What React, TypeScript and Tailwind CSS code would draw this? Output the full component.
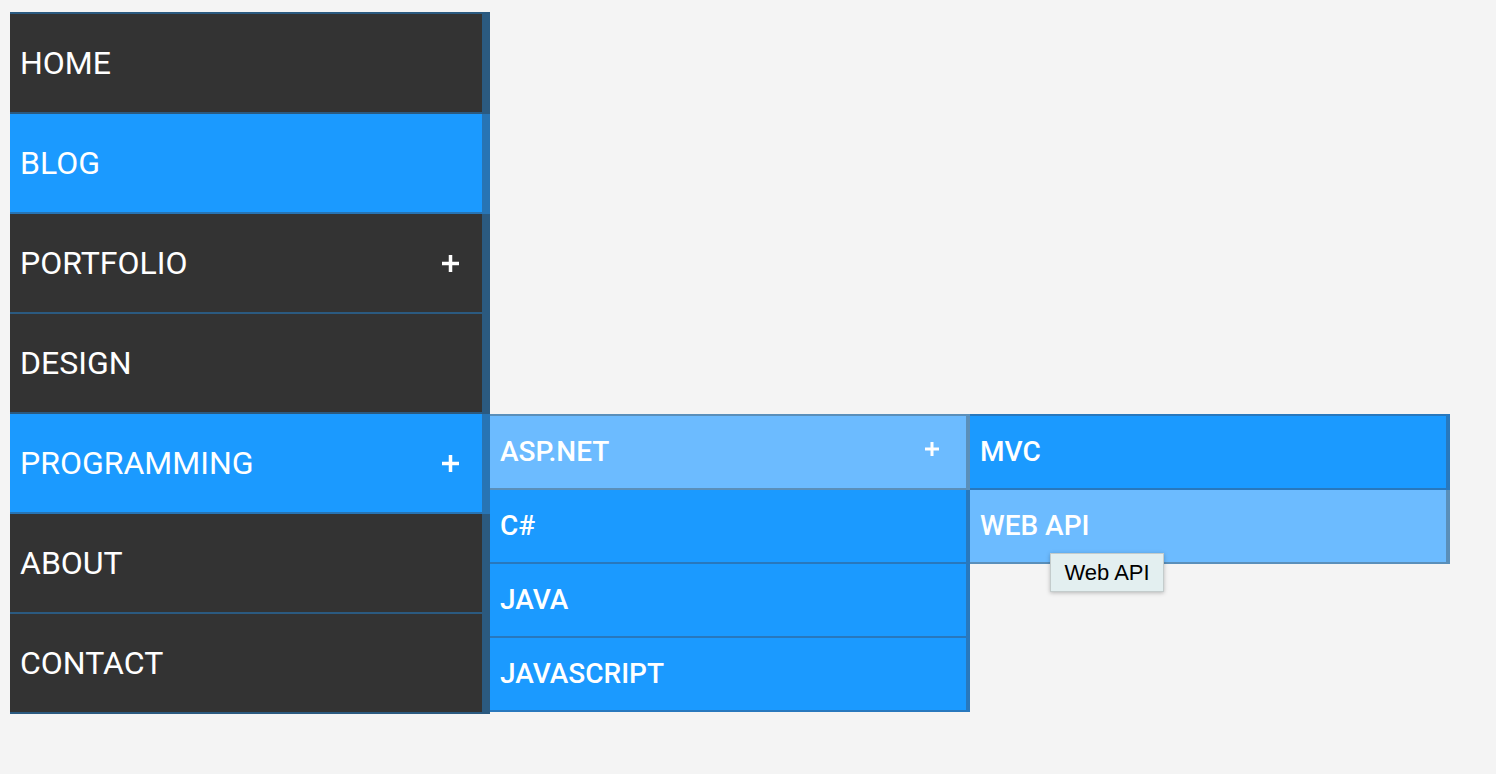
import { ReactNode } from 'react';

type Tone = 'dark' | 'blue' | 'light';

const mainTone: Record<Tone, string> = {
  dark: 'bg-[#333333] border-[#2b5a80]',
  blue: 'bg-[#1b9aff] border-[#2774b4]',
  light: 'bg-[#6cbbff] border-[#5a8fba]',
};

const subTone: Record<Tone, string> = {
  dark: 'bg-[#333333] border-[#2b5a80]',
  blue: 'bg-[#1b9aff] border-[#2878bd]',
  light: 'bg-[#6cbbff] border-[#5a8fba]',
};

function Plus({ size, stroke }: { size: number; stroke: number }) {
  const mid = (size - stroke) / 2;
  return (
    <svg width={size} height={size} viewBox={`0 0 ${size} ${size}`} fill="white">
      <rect x={0} y={mid} width={size} height={stroke} />
      <rect x={mid} y={0} width={stroke} height={size} />
    </svg>
  );
}

function MainItem({
  label,
  tone,
  first,
  more,
  children,
}: {
  label: string;
  tone: Tone;
  first?: boolean;
  more?: boolean;
  children?: ReactNode;
}) {
  return (
    <li
      className={`relative flex items-center border-b-2 border-r-8 pl-[10px] pr-[23px] text-[32px] text-white ${
        first ? 'h-[102px] border-t-2' : 'h-[100px]'
      } ${mainTone[tone]}`}
    >
      <span className="flex-1 leading-none">{label}</span>
      {more && <Plus size={17} stroke={3.5} />}
      {children}
    </li>
  );
}

function SubItem({
  label,
  tone,
  first,
  more,
  children,
}: {
  label: string;
  tone: Tone;
  first?: boolean;
  more?: boolean;
  children?: ReactNode;
}) {
  return (
    <li
      className={`relative flex items-center border-b-2 border-r-4 pl-[10px] pr-[27px] text-[28px] font-medium text-white ${
        first ? 'h-[76px] border-t-2' : 'h-[74px]'
      } ${subTone[tone]}`}
    >
      <span className="flex-1 leading-none">{label}</span>
      {more && (
        <span className="-mt-[6px]">
          <Plus size={14} stroke={3} />
        </span>
      )}
      {children}
    </li>
  );
}

export default function App() {
  return (
    <div
      className="h-[774px] w-full bg-[#f4f4f4] pl-[10px] pt-[12px]"
      style={{ fontFamily: 'Roboto, "Liberation Sans", sans-serif' }}
    >
      <ul className="w-[480px]">
        <MainItem label="HOME" tone="dark" first />
        <MainItem label="BLOG" tone="blue" />
        <MainItem label="PORTFOLIO" tone="dark" more />
        <MainItem label="DESIGN" tone="dark" />
        <MainItem label="PROGRAMMING" tone="blue" more>
          {/* first flyout */}
          <ul className="absolute left-[480px] top-0 z-10 w-[480px]">
            <SubItem label="ASP.NET" tone="light" first more>
              {/* second flyout */}
              <ul className="absolute left-[480px] top-[-2px] z-10 w-[480px]">
                <SubItem label="MVC" tone="blue" first />
                <SubItem label="WEB API" tone="light">
                  <div
                    className="absolute left-[80px] top-[63px] z-20 flex h-[39px] w-[114px] items-center justify-center border border-[#c4cccc] bg-[#e3eff0] text-[22px] font-normal text-black shadow-[0_1px_4px_rgba(0,0,0,0.25)]"
                    style={{ fontFamily: '"Liberation Sans", Arial, sans-serif' }}
                  >
                    Web API
                  </div>
                </SubItem>
              </ul>
            </SubItem>
            <SubItem label="C#" tone="blue" />
            <SubItem label="JAVA" tone="blue" />
            <SubItem label="JAVASCRIPT" tone="blue" />
          </ul>
        </MainItem>
        <MainItem label="ABOUT" tone="dark" />
        <MainItem label="CONTACT" tone="dark" />
      </ul>
    </div>
  );
}
